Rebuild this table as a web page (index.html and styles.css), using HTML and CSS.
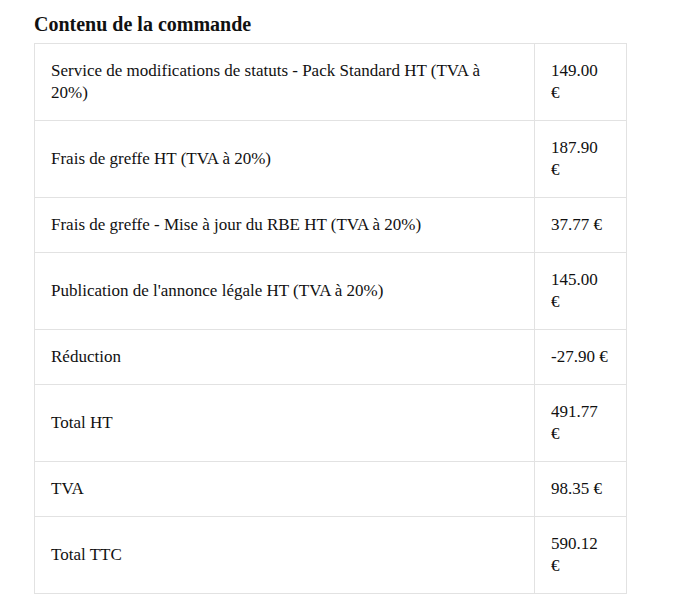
FILE: index.html
```html
<!DOCTYPE html>
<html lang="fr">
<head>
    <meta charset="UTF-8">
    <title>Contenu de la commande</title>
    <link rel="stylesheet" href="styles.css">
</head>
<body>
    <div class="order">
        <h2 class="order_title">Contenu de la commande</h2>
        <table class="order_table">
            <colgroup>
                <col class="col_label">
                <col class="col_amount">
            </colgroup>
            <tr>
                <td>Service de modifications de statuts - Pack Standard HT (TVA à 20%)</td>
                <td>149.00 €</td>
            </tr>
            <tr>
                <td>Frais de greffe HT (TVA à 20%)</td>
                <td>187.90 €</td>
            </tr>
            <tr>
                <td>Frais de greffe - Mise à jour du RBE HT (TVA à 20%)</td>
                <td>37.77 €</td>
            </tr>
            <tr>
                <td>Publication de l'annonce légale HT (TVA à 20%)</td>
                <td>145.00 €</td>
            </tr>
            <tr>
                <td>Réduction</td>
                <td>-27.90 €</td>
            </tr>
            <tr>
                <td>Total HT</td>
                <td>491.77 €</td>
            </tr>
            <tr>
                <td>TVA</td>
                <td>98.35 €</td>
            </tr>
            <tr>
                <td>Total TTC</td>
                <td>590.12 €</td>
            </tr>
        </table>
    </div>
</body>
</html>
```

FILE: styles.css
```css
body {
    margin: 0;
    background-color: #fff;
    font-family: "Liberation Serif", "Times New Roman", serif;
    color: #111;
}

.order {
    padding: 12px 34px;
}

.order_title {
    font-size: 20px;
    font-weight: bold;
    margin: 0 0 7px 0;
    line-height: 24px;
}

.order_table {
    width: 593px;
    border-collapse: collapse;
    table-layout: fixed;
    font-size: 17px;
}

.col_amount {
    width: 92px;
}

.order_table td {
    border: 1px solid #e2e2e2;
    padding: 16px;
    line-height: 22px;
    vertical-align: middle;
}
```
